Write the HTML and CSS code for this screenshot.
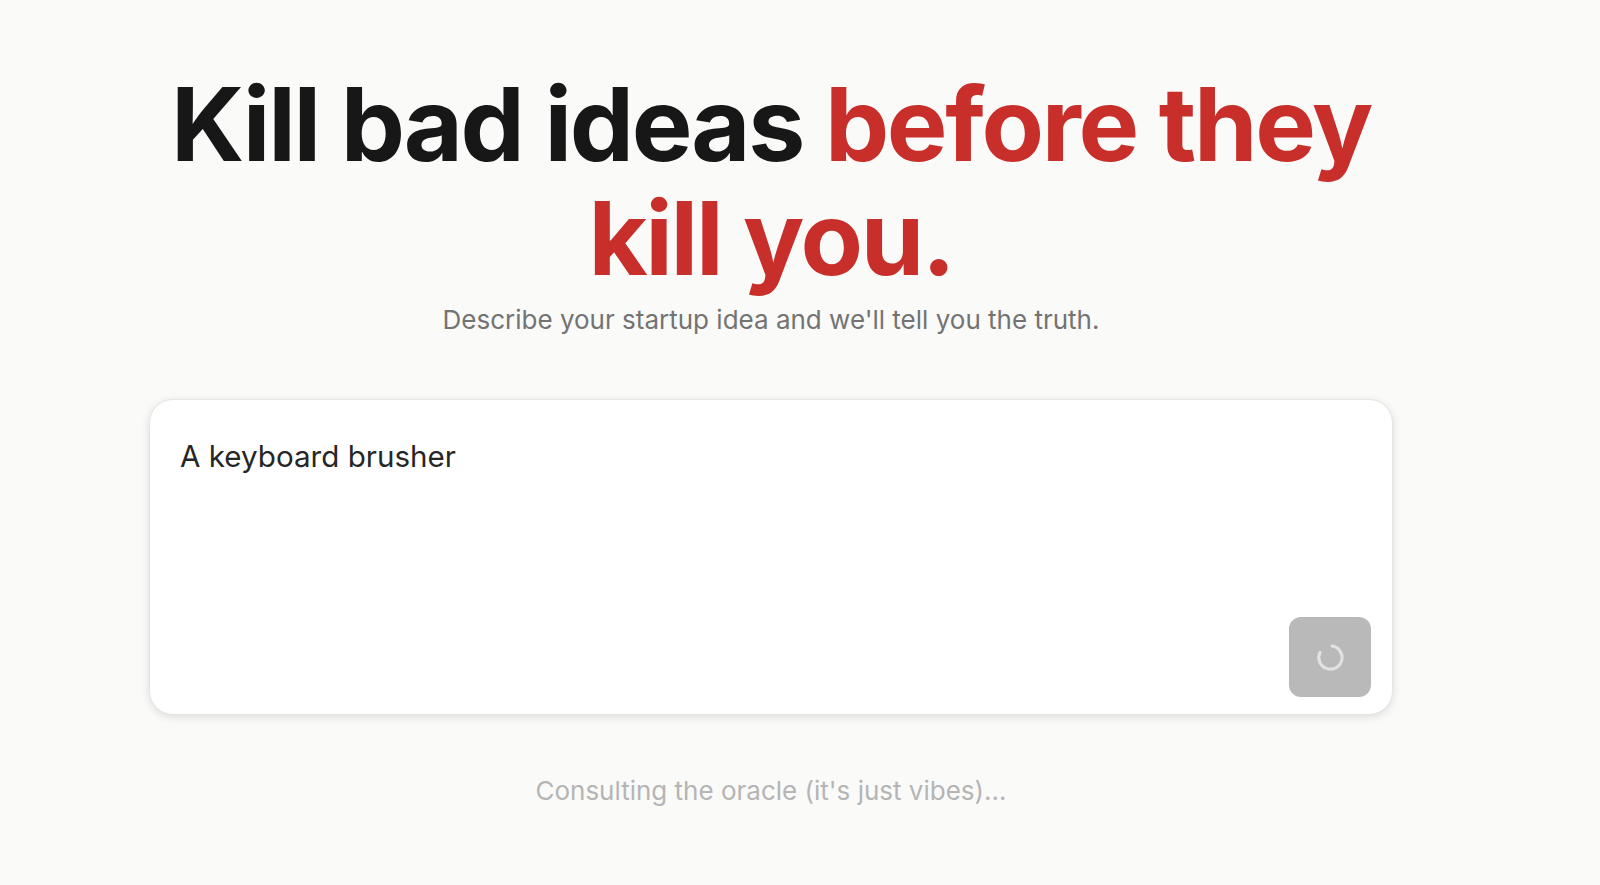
FILE: index.html
```html
<!DOCTYPE html>
<html lang="en">
<head>
<meta charset="utf-8">
<title>Kill bad ideas</title>
<link rel="stylesheet" href="styles.css">
</head>
<body>
<main class="page">
  <h1 class="title">Kill bad ideas <span class="accent">before they kill you.</span></h1>
  <p class="subtitle">Describe your startup idea and we'll tell you the truth.</p>
  <form class="card">
    <div class="idea">A keyboard brusher</div>
    <div class="actions">
      <button class="submit" type="button" aria-label="Loading">
        <svg class="spinner" viewBox="0 0 24 24" fill="none" stroke="currentColor" stroke-linecap="round"><path d="M21 12a9 9 0 1 1-6.2-8.6"/></svg>
      </button>
    </div>
  </form>
  <p class="status">Consulting the oracle (it's just vibes)...</p>
</main>
</body>
</html>
```
FILE: styles.css
```css
* { box-sizing: border-box; }
html, body { margin: 0; height: 100%; }
body { background: #fafaf9; font-family: Inter, "Liberation Sans", sans-serif; overflow: hidden; }
.page { width: 1244px; margin-left: 149px; padding-top: 67px; display: flex; flex-direction: column; align-items: center; }
.title { margin: 0; width: 1244px; text-align: center; font-size: 102px; line-height: 114px; font-weight: 700; letter-spacing: -2.3px; color: #171717; }
.accent { color: #c92f2a; }
.subtitle { margin: 9px 0 0; font-size: 26px; line-height: 32px; color: #737373; }
.card { margin-top: 63px; width: 1244px; height: 316px; background: #fff; border: 1px solid #e7e5e4; border-radius: 24px; box-shadow: 0 2px 8px rgba(0,0,0,.12); padding: 24px 21px 17px 30px; display: flex; flex-direction: column; justify-content: space-between; }
.idea { font-size: 29.6px; line-height: 64px; color: #262626; }
.actions { display: flex; justify-content: flex-end; }
.submit { width: 82px; height: 80px; border: 0; border-radius: 12px; background: #b9b9b9; color: #e2e2e2; display: flex; align-items: center; justify-content: center; padding: 0; }
.spinner { width: 31px; height: 31px; stroke-width: 2.4; transform: rotate(-82deg); }
.status { margin: 60px 0 0; font-size: 26px; line-height: 32px; color: #b5b5b5; }
```
